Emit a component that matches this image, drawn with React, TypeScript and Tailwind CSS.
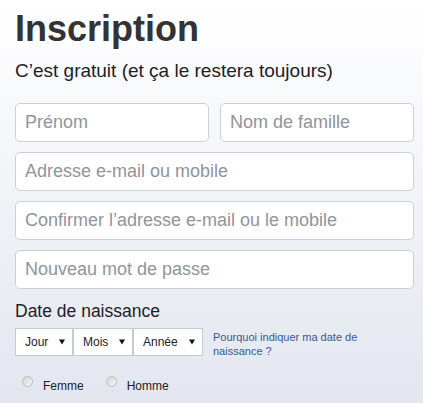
import React from 'react';

const font = { fontFamily: '"Liberation Sans", Arial, Helvetica, sans-serif' };

function Field({ placeholder, className = '' }: { placeholder: string; className?: string }) {
  return (
    <input
      type="text"
      placeholder={placeholder}
      className={`h-[39px] min-w-0 rounded-[5px] border border-[#ccd0d5] bg-white px-[9px] text-[18px] text-[#1d2129] placeholder:text-[#90949c] outline-none ${className}`}
    />
  );
}

function FakeSelect({ label, width }: { label: string; width: string }) {
  return (
    <div className={`flex h-[28px] items-center justify-between border border-[#c6cbd3] bg-white pl-[9px] pr-[7px] text-[12px] text-[#1d2129] ${width}`}>
      <span>{label}</span>
      <svg aria-hidden="true" width="6" height="6" viewBox="0 0 6 6">
        <path d="M0 0.5h6L3 5.5z" fill="#111" />
      </svg>
    </div>
  );
}

function Radio({ label }: { label: string }) {
  return (
    <label className="flex items-center gap-[10px] text-[12px] leading-[16px] text-[#1d2129]">
      <span className="mb-[8px] h-[11px] w-[11px] rounded-full border border-[#bcbcbc] bg-gradient-to-br from-[#d4d4d4] to-[#f7f7f7]" />
      {label}
    </label>
  );
}

export default function App() {
  return (
    <main
      style={font}
      className="h-[403px] w-[423px] overflow-hidden bg-gradient-to-b from-white to-[#e3e6ef] pl-[15px] pr-[9px] pt-[11px]"
    >
      <h1 className="text-[36px] font-bold leading-[36px] text-[#333]">Inscription</h1>
      <p className="mt-[12px] text-[19px] leading-[24px] text-[#1d2129]">C’est gratuit (et ça le restera toujours)</p>

      <form className="mt-[20px] flex flex-col gap-[10px]">
        <div className="grid grid-cols-2 gap-[11px]">
          <Field placeholder="Prénom" />
          <Field placeholder="Nom de famille" />
        </div>
        <Field placeholder="Adresse e-mail ou mobile" />
        <Field placeholder="Confirmer l’adresse e-mail ou le mobile" />
        <Field placeholder="Nouveau mot de passe" />
      </form>

      <div className="mt-[12px] text-[17.5px] leading-[20px] text-[#1d2129]">Date de naissance</div>
      <div className="mt-[7px] flex items-start">
        <div className="flex">
          <FakeSelect label="Jour" width="w-[58px]" />
          <FakeSelect label="Mois" width="w-[60px]" />
          <FakeSelect label="Année" width="w-[70px]" />
        </div>
        <a href="#" className="ml-[10px] mt-[2px] w-[150px] text-[11px] leading-[14px] text-[#365899]">
          Pourquoi indiquer ma date de naissance ?
        </a>
      </div>

      <div className="ml-[7px] mt-[18px] flex gap-[22px]">
        <Radio label="Femme" />
        <Radio label="Homme" />
      </div>
    </main>
  );
}
